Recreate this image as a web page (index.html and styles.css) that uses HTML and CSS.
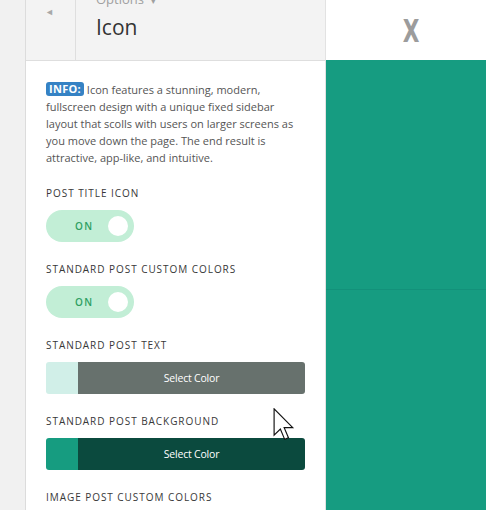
FILE: index.html
```html
<!DOCTYPE html>
<html>
<head>
<meta charset="utf-8">
<link rel="stylesheet" href="styles.css">
</head>
<body>
<div class="page">
  <div class="strip"></div>
  <div class="panel">
    <div class="header">
      <div class="back"><span class="back-arrow">◄</span></div>
      <div class="titles">
        <div class="crumb">Options <span class="caret">▾</span></div>
        <div class="title">Icon</div>
      </div>
    </div>
    <div class="body">
      <p class="info"><span class="badge">INFO:</span> Icon features a stunning, modern, fullscreen design with a unique fixed sidebar layout that scolls with users on larger screens as you move down the page. The end result is attractive, app-like, and intuitive.</p>

      <div class="field">
        <div class="label">Post Title Icon</div>
        <div class="toggle"><span class="toggle-text">ON</span><span class="knob"></span></div>
      </div>

      <div class="field">
        <div class="label">Standard Post Custom Colors</div>
        <div class="toggle"><span class="toggle-text">ON</span><span class="knob"></span></div>
      </div>

      <div class="field">
        <div class="label">Standard Post Text</div>
        <div class="colorbar bar-text"><span class="swatch"></span><span class="select">Select Color</span></div>
      </div>

      <div class="field">
        <div class="label">Standard Post Background</div>
        <div class="colorbar bar-bg"><span class="swatch"></span><span class="select">Select Color</span></div>
      </div>

      <div class="field">
        <div class="label">Image Post Custom Colors</div>
      </div>
    </div>
  </div>
  <div class="preview">
    <div class="preview-top"><span class="logo">X</span></div>
    <div class="preview-main">
      <div class="teal-block"></div>
      <div class="teal-block"></div>
    </div>
  </div>
  <svg class="cursor" width="22" height="33" viewBox="0 0 13 20">
    <path d="M0.5 0.5 L0.5 16.5 L4.3 12.8 L6.9 19 L9.2 18 L6.6 11.9 L11.8 11.9 Z" fill="#fff" stroke="#111" stroke-width="0.7" stroke-linejoin="miter"/>
  </svg>
</div>
</body>
</html>
```

FILE: styles.css
```css
* { box-sizing: border-box; }
html, body {
  margin: 0;
  padding: 0;
  width: 486px;
  height: 510px;
  overflow: hidden;
  font-family: "Open Sans", "Liberation Sans", sans-serif;
}
.page {
  position: relative;
  display: flex;
  width: 486px;
  height: 510px;
}
.strip {
  width: 26px;
  flex: none;
  background: #f1f1f1;
  border-right: 1px solid #dcdcdc;
}
.panel {
  width: 300px;
  flex: none;
  background: #fff;
  border-right: 1px solid #e2e2e2;
  display: flex;
  flex-direction: column;
}
.header {
  height: 61px;
  flex: none;
  display: flex;
  background: #f3f3f3;
  border-bottom: 1px solid #dedede;
}
.back {
  width: 50px;
  flex: none;
  border-right: 1px solid #dedede;
  display: flex;
  justify-content: center;
  padding-top: 4px;
}
.back-arrow {
  font-size: 9px;
  color: #a8a8a8;
  line-height: 16px;
  margin-right: 2px;
}
.titles {
  padding-left: 20px;
  display: flex;
  flex-direction: column;
}
.crumb {
  margin-top: -10px;
  font-size: 13px;
  line-height: 18px;
  color: #a0a0a0;
}
.caret {
  font-size: 9px;
  margin-left: 4px;
}
.title {
  margin-top: 2px;
  font-size: 21px;
  line-height: 30px;
  color: #333;
}
.body {
  padding: 20px 20px 0 20px;
}
.info {
  margin: 0;
  font-size: 11px;
  line-height: 17px;
  color: #555;
}
.badge {
  display: inline-block;
  background: #3582c4;
  color: #fff;
  font-weight: 700;
  font-size: 11px;
  line-height: 14px;
  padding: 0 3px;
  border-radius: 3px;
  letter-spacing: 0.3px;
  vertical-align: 1px;
}
.field {
  margin-top: 19px;
}
.info + .field {
  margin-top: 19px;
}
.label {
  font-size: 10px;
  line-height: 16px;
  letter-spacing: 0.95px;
  text-transform: uppercase;
  color: #383838;
  margin-bottom: 9px;
}
.toggle {
  width: 88px;
  height: 32px;
  border-radius: 16px;
  background: #c2eed6;
  display: flex;
  align-items: center;
  padding-left: 29px;
  padding-right: 6px;
  justify-content: space-between;
}
.toggle-text {
  font-size: 10px;
  font-weight: 600;
  letter-spacing: 1.3px;
  color: #2e9f62;
}
.knob {
  width: 20px;
  height: 20px;
  border-radius: 50%;
  background: #fff;
}
.colorbar {
  width: 259px;
  height: 32px;
  border-radius: 3px;
  overflow: hidden;
  display: flex;
}
.swatch {
  width: 32px;
  flex: none;
}
.select {
  flex: 1;
  display: flex;
  align-items: center;
  justify-content: center;
  color: #fff;
  font-size: 10.5px;
  letter-spacing: -0.2px;
}
.bar-text .swatch { background: #d1efe8; }
.bar-text .select { background: #67716d; }
.bar-bg .swatch { background: #169c80; }
.bar-bg .select { background: #0b4a3e; }
.preview {
  flex: 1;
  display: flex;
  flex-direction: column;
}
.preview-top {
  height: 60px;
  flex: none;
  background: #fff;
  display: flex;
  justify-content: center;
  align-items: center;
  padding-left: 10px;
}
.logo {
  font-family: "DejaVu Sans Condensed", "DejaVu Sans", sans-serif;
  font-weight: 700;
  font-size: 32px;
  line-height: 32px;
  color: #9c9c9c;
  transform: scaleX(0.75);
  margin-top: 2px;
}
.preview-main {
  flex: 1;
  background: #169c81;
  display: flex;
  flex-direction: column;
}
.teal-block {
  height: 230px;
  flex: none;
  border-bottom: 1px solid #13917a;
}
.cursor {
  position: absolute;
  left: 273px;
  top: 408px;
}
```
